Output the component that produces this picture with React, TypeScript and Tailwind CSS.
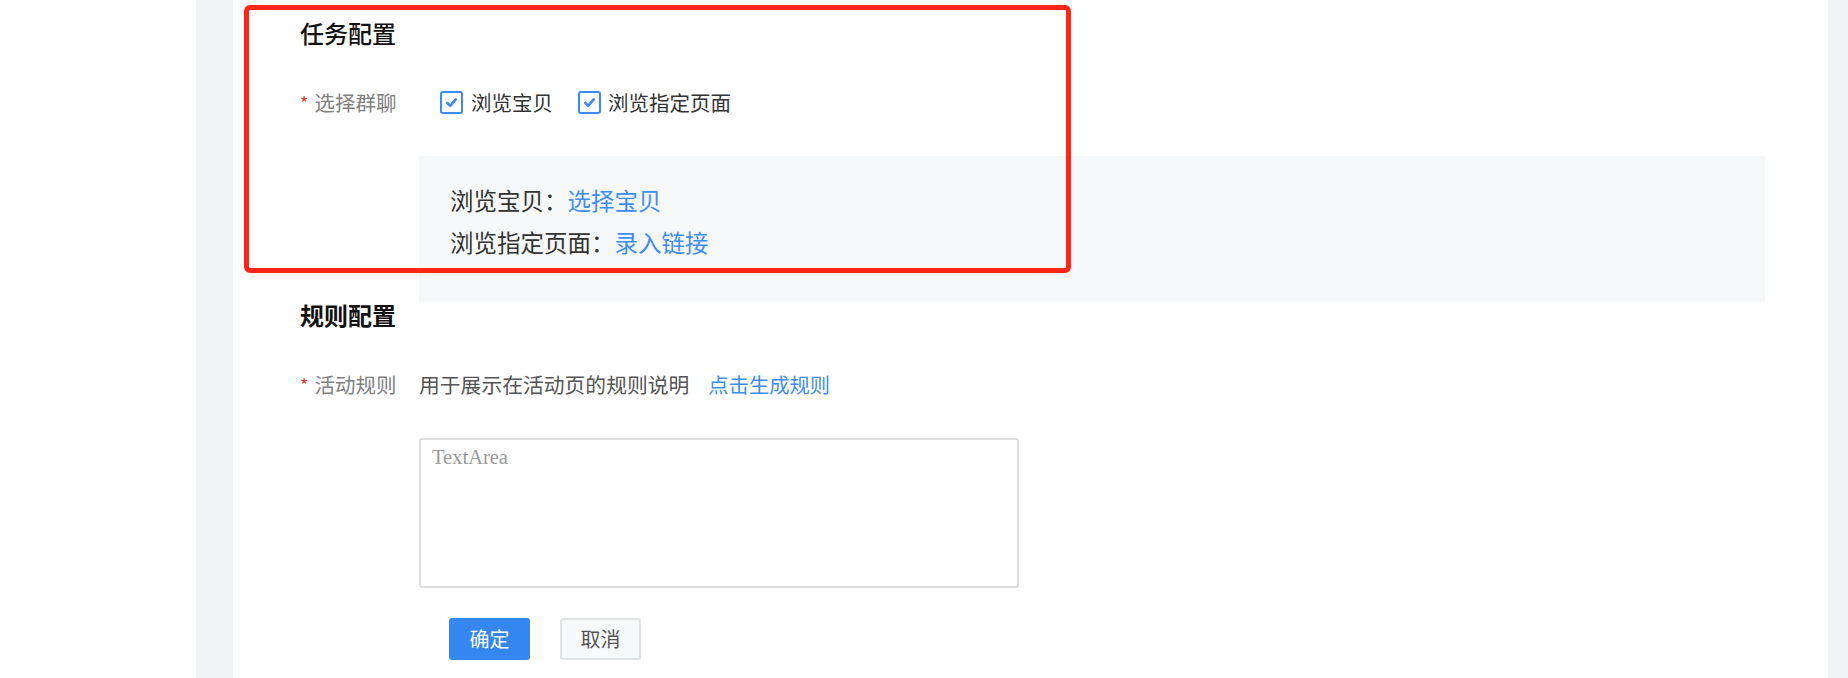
import React from 'react';

function Check() {
  return (
    <span className="flex h-[23px] w-[23px] items-center justify-center rounded-[3px] border-2 border-[#3d8af7] bg-white">
      <svg viewBox="0 0 16 16" className="h-[15px] w-[15px]" fill="none" stroke="#3d8af7" strokeWidth="2.8" strokeLinecap="round" strokeLinejoin="round">
        <polyline points="3.5,8.5 6.6,11.6 12.5,4.6" />
      </svg>
    </span>
  );
}

function Label({ text }: { text: string }) {
  return (
    <div className="flex w-[119px] shrink-0 items-center text-[20.5px] leading-[24px] text-[#808080]">
      <span className="mr-[6px] text-[18px] text-[#f5342b]">*</span>
      {text}
    </div>
  );
}

export default function App() {
  return (
    <div className="flex h-[678px] w-full overflow-hidden bg-white font-['Noto_Sans_CJK_SC',sans-serif]">
      <div className="w-[196px] shrink-0 bg-[#fefefe]" />
      <div className="w-[37px] shrink-0 bg-[#f3f4f6]" />

      <div className="relative flex-1 bg-white pl-[67px] pt-[21px]">
        {/* Task config */}
        <h2 className="text-[24px] font-medium leading-[24px] text-[#111]">任务配置</h2>

        <div className="mt-[45px] flex items-center">
          <Label text="选择群聊" />
          <div className="ml-[21px] flex items-center text-[20.5px] leading-[24px] text-[#333]">
            <Check />
            <span className="ml-[8px]">浏览宝贝</span>
            <span className="ml-[25px]">
              <Check />
            </span>
            <span className="ml-[7px]">浏览指定页面</span>
          </div>
        </div>

        <div className="ml-[119px] mt-[42px] w-[1346px] bg-[#f7f8fa] pb-[39px] pl-[31px] pt-[23px] text-[23.5px] leading-[42px] text-[#333]">
          <div>
            浏览宝贝：<span className="text-[#3f8cf4]">选择宝贝</span>
          </div>
          <div>
            浏览指定页面：<span className="text-[#3f8cf4]">录入链接</span>
          </div>
        </div>

        {/* Rule config */}
        <h2 className="mt-[1px] text-[24px] font-bold leading-[24px] text-[#111]">规则配置</h2>

        <div className="mt-[45px] flex items-center">
          <Label text="活动规则" />
          <span className="text-[20.8px] leading-[24px] text-[#555]">用于展示在活动页的规则说明</span>
          <span className="ml-[19px] text-[20.3px] leading-[24px] text-[#3f8cf4]">点击生成规则</span>
        </div>

        <textarea
          placeholder="TextArea"
          className="ml-[119px] mt-[42px] block h-[150px] w-[600px] resize-none rounded-[3px] border-2 border-[#dedede] bg-white px-[11px] pt-[5px] font-['Liberation_Serif',serif] text-[20.5px] leading-[24px] text-[#333] outline-none placeholder:text-[#9a9a9a]"
        />

        <div className="ml-[149px] mt-[30px] flex gap-[30px]">
          <button className="h-[42px] w-[81px] rounded-[3px] bg-[#3587f0] text-[20px] text-white">确定</button>
          <button className="h-[42px] w-[81px] rounded-[3px] border-2 border-[#e0e2e6] bg-[#f8f9fb] text-[20px] text-[#555]">取消</button>
        </div>

        {/* Annotation box */}
        <div className="pointer-events-none absolute left-[11px] top-[5px] h-[268px] w-[827px] rounded-[6px] border-[5px] border-[#ff2618]" />
      </div>

      <div className="w-[20px] shrink-0 bg-[#f3f4f6]" />
    </div>
  );
}
